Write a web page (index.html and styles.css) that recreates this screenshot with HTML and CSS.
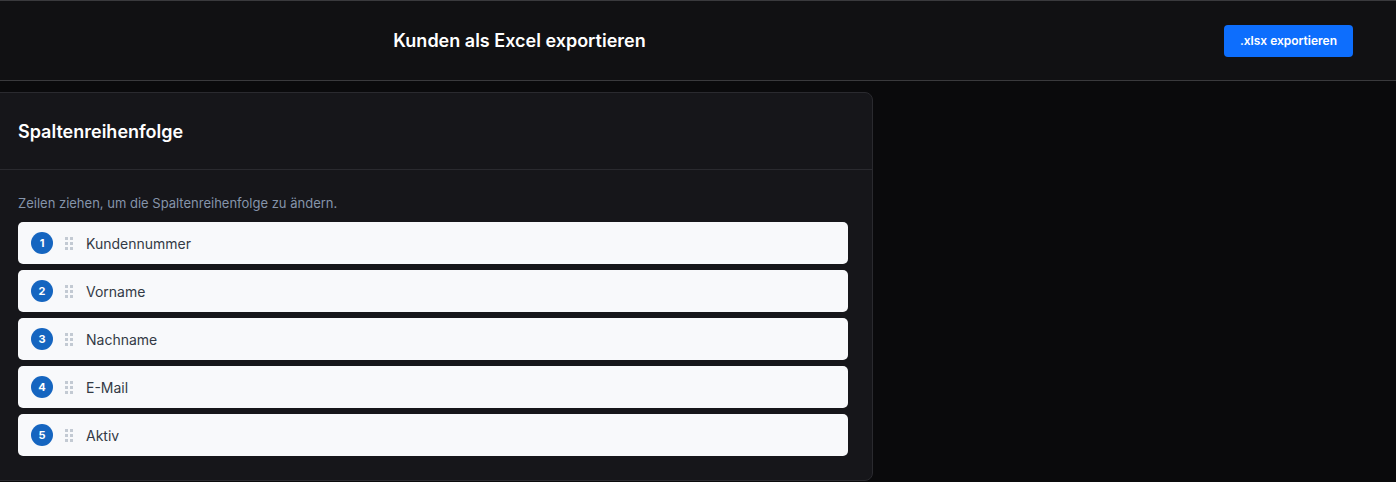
FILE: index.html
```html
<!DOCTYPE html>
<html lang="de">

<head>
	<meta charset="UTF-8">
	<meta name="viewport" content="width=device-width, initial-scale=1.0">
	<title>Kunden als Excel exportieren</title>
	<link rel="stylesheet" href="styles.css">
</head>

<body>
	<header class="topbar">
		<h1 class="topbar-title">Kunden als Excel exportieren</h1>
		<div class="topbar-actions">
			<button class="btn-export">.xlsx exportieren</button>
		</div>
	</header>

	<main class="content">
		<section class="card">
			<div class="card-header">
				<h2>Spaltenreihenfolge</h2>
			</div>
			<div class="card-body">
				<p class="hint">Zeilen ziehen, um die Spaltenreihenfolge zu ändern.</p>
				<ul class="column-list">
					<li><span class="badge">1</span><span class="handle"></span><span class="label">Kundennummer</span></li>
					<li><span class="badge">2</span><span class="handle"></span><span class="label">Vorname</span></li>
					<li><span class="badge">3</span><span class="handle"></span><span class="label">Nachname</span></li>
					<li><span class="badge">4</span><span class="handle"></span><span class="label">E-Mail</span></li>
					<li><span class="badge">5</span><span class="handle"></span><span class="label">Aktiv</span></li>
				</ul>
			</div>
		</section>
	</main>
</body>

</html>
```

FILE: styles.css
```css
* {
	box-sizing: border-box;
}

body {
	margin: 0;
	background: #0a0a0c;
	font-family: Inter, "Noto Sans", sans-serif;
	color: #f2f2f4;
	overflow: hidden;
}

.topbar {
	display: grid;
	grid-template-columns: 1039px 1fr;
	align-items: center;
	height: 81px;
	background: #111113;
	border-top: 1px solid #3a3a3d;
	border-bottom: 1px solid #3a3a3d;
}

.topbar-title {
	margin: 0;
	text-align: center;
	font-size: 18px;
	font-weight: 600;
	color: #fff;
}

.topbar-actions {
	display: flex;
	justify-content: flex-end;
	padding-right: 43px;
}

.btn-export {
	height: 32px;
	padding: 0 16px;
	border: none;
	border-radius: 4px;
	background: #0d6efd;
	color: #fff;
	font-family: inherit;
	font-size: 12px;
	font-weight: 600;
}

.content {
	padding-top: 11px;
}

/* la carte déborde un peu à gauche de l'écran */
.card {
	width: 881px;
	margin-left: -8px;
	background: #16161a;
	border: 1px solid #2a2a2f;
	border-radius: 8px;
}

.card-header {
	height: 77px;
	display: flex;
	align-items: center;
	padding: 0 25px;
	border-bottom: 1px solid #2a2a2f;
}

.card-header h2 {
	margin: 0;
	font-size: 18px;
	font-weight: 600;
	color: #fff;
}

.card-body {
	padding: 24px 24px 24px 25px;
}

.hint {
	margin: 0 0 10px;
	font-size: 13px;
	line-height: 18px;
	color: #8594aa;
}

.column-list {
	list-style: none;
	margin: 0;
	padding: 0;
	display: flex;
	flex-direction: column;
	gap: 6px;
}

.column-list li {
	display: flex;
	align-items: center;
	height: 42px;
	padding: 0 13px;
	background: #f8f9fb;
	border-radius: 5px;
}

.badge {
	width: 22px;
	height: 22px;
	border-radius: 50%;
	background: #1565c0;
	color: #fff;
	font-size: 11px;
	font-weight: 700;
	display: flex;
	align-items: center;
	justify-content: center;
}

.handle {
	width: 8px;
	height: 13px;
	margin: 0 13px 0 12px;
	background-image: radial-gradient(circle at 1.5px 1.5px, #c3cad3 1.5px, transparent 1.6px);
	background-size: 5px 5px;
}

.label {
	font-size: 14px;
	color: #333a45;
}
```
